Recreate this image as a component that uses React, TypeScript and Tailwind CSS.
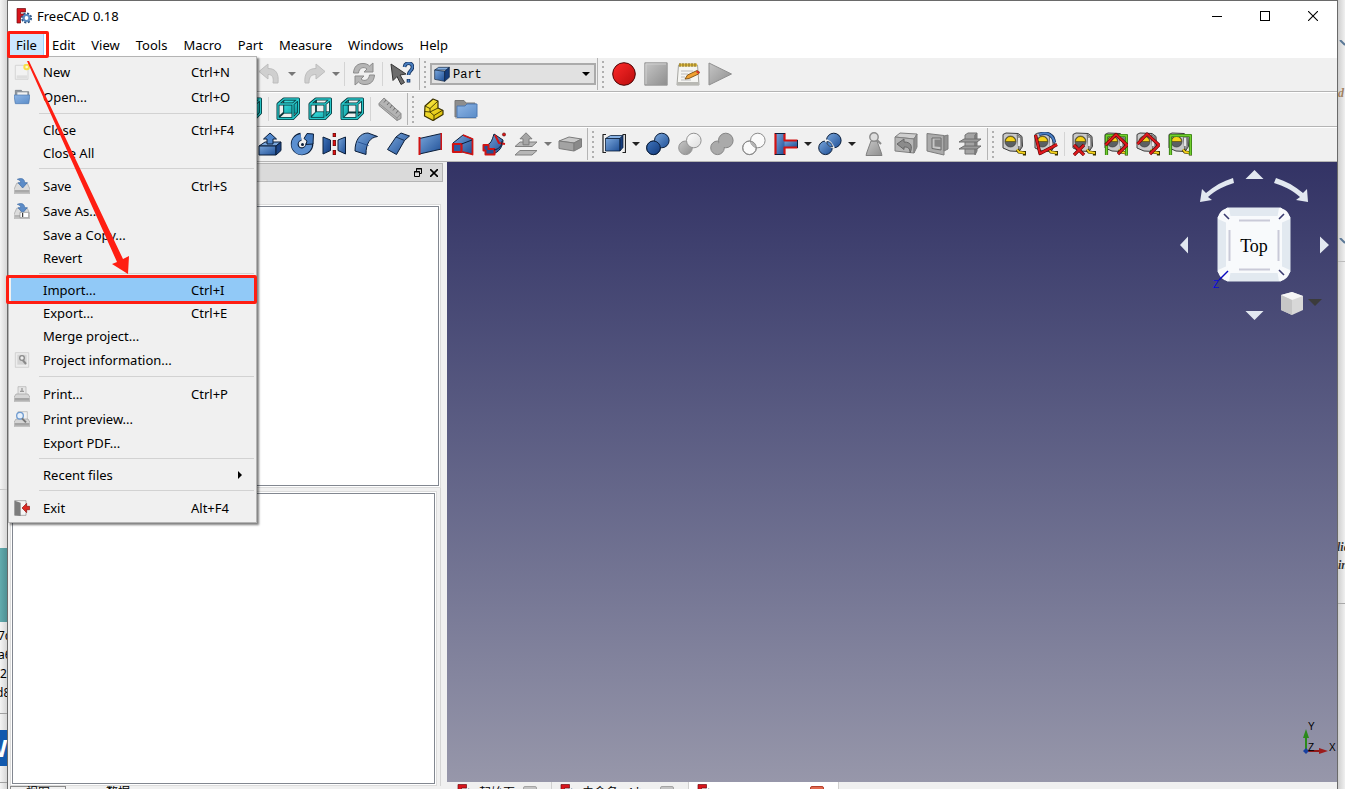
import { Fragment, type ReactNode } from 'react';

const INK = '#0b1e3a';

function Icon({ children, className = 'size-6' }: { children: ReactNode; className?: string }) {
  return (
    <svg viewBox="0 0 24 24" className={className} fill="none" strokeLinejoin="round" aria-hidden="true">
      {children}
    </svg>
  );
}

// Gradients shared by all of the icons
function Gradients() {
  const list = [
    ['blue', '#7aa7dc', '#1f4f96'],
    ['deep', '#3f75bd', '#123a7c'],
    ['gray', '#c6c6c6', '#8e8e8e'],
    ['pale', '#ffffff', '#dcdcdc'],
    ['red', '#ff2a2a', '#b80c0c'],
    ['yellow', '#fff04a', '#d8b800'],
    ['teal', '#3fe6e6', '#0c9a9e'],
    ['folder', '#8fb6e6', '#5a8cc8'],
  ];
  return (
    <svg width="0" height="0" className="absolute" aria-hidden="true">
      <defs>
        {list.map(([id, from, to]) => (
          <linearGradient key={id} id={id} x1="0" y1="0" x2="1" y2="1">
            <stop offset="0" stopColor={from} />
            <stop offset="1" stopColor={to} />
          </linearGradient>
        ))}
      </defs>
    </svg>
  );
}

function AppLogo({ className }: { className?: string }) {
  return (
    <svg viewBox="0 0 16 16" className={className} aria-hidden="true">
      <path d="M1 .5h8.500v3.500h-5v2h4v3h-4v6h-3.500z" fill="#d8141c" stroke="#6d0c10" strokeWidth=".7" />
      <circle cx="10.500" cy="10" r="4" fill="none" stroke="#27507f" strokeWidth="3" strokeDasharray="1.800 1.340" />
      <circle cx="10.500" cy="10" r="3" fill="none" stroke="#5b8bc0" strokeWidth="2.200" />
      <circle cx="10.500" cy="10" r="1.300" fill="#fff" />
    </svg>
  );
}

function Circles({ a, b, stroke, overlay }: { a: string; b: string; stroke: string; overlay?: ReactNode }) {
  return (
    <Icon>
      <circle cx="7.500" cy="15.800" r="6.800" fill={a} stroke={stroke} />
      <circle cx="15.800" cy="8.500" r="7.300" fill={b} stroke={stroke} />
      {overlay}
    </Icon>
  );
}

function WireCube({ face }: { face: 'rear' | 'bottom' | 'left' | 'right' }) {
  const faces = {
    rear: '8,3 22,3 22,16 8,16',
    bottom: '2,22 8,15 22,15 17,22',
    left: '2,7 8,2 8,15 2,22',
    right: '17,7 22,2 22,16 17,22',
  };
  return (
    <Icon>
      <path d="M8 3v12.500h14M8 15.500L2 21" stroke="#08363a" strokeWidth="1.800" />
      <polygon points={faces[face]} fill="url(#teal)" stroke="#0b6a6e" strokeWidth=".6" />
      <path d="M2 7h15v14.500H2zM2 7l6-5h14.500L17 7M22.500 2v14L17 21.500" stroke="#06393d" strokeWidth="3" />
      <path d="M2 7h15v14.500H2zM2 7l6-5h14.500L17 7M22.500 2v14L17 21.500" stroke="#28c8ca" strokeWidth="1.300" />
    </Icon>
  );
}

function Tape({ overlay }: { overlay?: ReactNode }) {
  return (
    <Icon>
      <path d="M1 2.500L4 1l12 .5 4 3 .5 10-3.500 5-9-.5-7-3z" fill="#c9c9c9" stroke="#3c3c3c" />
      <path d="M15 2.500l4 2.500.800 9.500-3 4z" fill="#9a9a9a" stroke="#4a4a4a" strokeWidth=".6" />
      <path d="M17 6v8" stroke="#fafafa" strokeWidth="1.600" />
      <circle cx="8.500" cy="9.500" r="5.500" fill="#5b6062" stroke="#3c3c3c" strokeWidth=".7" />
      <path d="M3.500 9.500a5 5 0 0 1 10 0z" fill="#f6d31c" stroke="#4d4200" strokeWidth=".6" />
      <path d="M15 17.500l2 2.500 6 1M22.500 19v4.500" stroke="#3a3200" strokeWidth="3.200" />
      <path d="M15 17.500l2 2.500 6 1" stroke="#f6d31c" strokeWidth="1.800" />
      {overlay}
    </Icon>
  );
}

const redMark = (d: string) => (
  <>
    <path d={d} stroke="#5c0505" strokeWidth="3.200" />
    <path d={d} stroke="#e0191d" strokeWidth="2" />
  </>
);

const greenMark = (
  <>
    <path d="M2.500 23V3.500h20V23" stroke="#23610b" strokeWidth="3.200" />
    <path d="M2.500 23V3.500h20V23" stroke="#72cf2e" strokeWidth="1.800" />
  </>
);

const icons: Record<string, ReactNode> = {
  undo: (
    <Icon>
      <path d="M1 9.500L10 2v4.500c8 0 11 5 10 14.500h-5c1-6-1-8.500-5-8.500V17z" fill="#cfcfcf" stroke="#bdbdbd" />
    </Icon>
  ),
  redo: (
    <Icon>
      <path d="M23 9.500L14 2v4.500c-8 0-12 5-11 14.500h4c0-6 2-8.500 7-8.500V17z" fill="#cfcfcf" stroke="#bdbdbd" />
    </Icon>
  ),
  refresh: (
    <Icon>
      <path d="M1.500 11C2 4.500 5.500 1.500 11 1.500c3 0 5 1 6.500 2.500l3.500-3v9h-9l3-3c-3.500-3-8-1-8.500 4z" fill="#b5b5b5" stroke="#8b8b8b" />
      <path d="M22.500 13c-.5 6.500-4 9.500-9.500 9.500-3 0-5-1-6.500-2.500L3 23v-9h9l-3 3c3.500 3 8 1 8.500-4z" fill="#b5b5b5" stroke="#8b8b8b" />
    </Icon>
  ),
  whatsThis: (
    <Icon>
      <path d="M1 2l15 10-6 1 4.500 7.500-3.500 2-4-8-4 4z" fill="#6c6c6c" stroke="#343434" />
      <path d="M14.500 5c.5-5 8-5 8 0 0 4-4 3.500-4 8M18.500 17v3.500" stroke="#12305c" strokeWidth="3.600" />
      <path d="M14.500 5c.5-5 8-5 8 0 0 4-4 3.500-4 8M18.500 17.500v2.500" stroke="#4a7fc0" strokeWidth="1.800" />
    </Icon>
  ),
  record: (
    <Icon>
      <circle cx="12" cy="12" r="11.300" fill="url(#red)" stroke="#4a0707" />
    </Icon>
  ),
  stop: (
    <Icon>
      <rect x=".8" y=".8" width="22.400" height="22.400" fill="url(#gray)" stroke="#989898" />
      <path d="M2 22V2h20" stroke="#cfcfcf" />
    </Icon>
  ),
  macros: (
    <Icon>
      <path d="M2.500 3h19L23 23H1z" fill="#f5f5f2" stroke="#a5a5a0" />
      <path d="M1 20h22v3H1z" fill="#b9b9b4" />
      <path d="M3 1.500h18v3H3z" fill="#d9b63c" />
      <path d="M4 1v4M7 1v4M10 1v4M13 1v4M16 1v4M19 1v4" stroke="#5e4c14" strokeWidth=".7" />
      <path d="M5 9h12M5 12h7M5 15h4M5 18h10" stroke="#bcbcbc" />
      <path d="M9 17l2.500-4L21 8.500l2.500 1.500-1 2L13 16.500z" fill="#f0a030" stroke="#6b4308" strokeWidth=".8" />
      <path d="M21 8.500l2.500 1.500-1 2-2.500-2z" fill="#d8342c" />
    </Icon>
  ),
  play: (
    <Icon>
      <path d="M1 1l22.500 11L1 23z" fill="url(#gray)" stroke="#8f8f8f" />
    </Icon>
  ),
  cubeRight: <WireCube face="right" />,
  cubeRear: <WireCube face="rear" />,
  cubeBottom: <WireCube face="bottom" />,
  cubeLeft: <WireCube face="left" />,
  ruler: (
    <Icon>
      <path d="M1 6.500l5-5.500 17 15.500v5l-4 2L1 8.500z" fill="#b4b4b4" stroke="#8a8a8a" />
      <path d="M1 6.500l18 14.500 4-4.500M19 21v2.500" stroke="#8a8a8a" strokeWidth=".8" />
      <path d="M8 3l-2 2.500M11 5.500l-2 2.500M14 8l-2 3M17 11l-2 2.500M20 13.500l-2 3" stroke="#666" strokeWidth=".9" />
    </Icon>
  ),
  part: (
    <Icon>
      <path d="M3 9l8-7 5 2v7l5 2.500v4L11 23.500 2.500 19z" fill="url(#yellow)" stroke="#3b3200" strokeWidth="1.200" />
      <path d="M3 9l5 2.500L16 4M8 11.500V15l8-4M2.500 14.500L8 15l4 3.500 9-5.500M12 18.500v5" stroke="#3b3200" strokeWidth=".9" />
    </Icon>
  ),
  group: (
    <Icon>
      <path d="M1 20V3.500h9L12 6h9v14z" fill="#8d8d8d" stroke="#777" />
      <path d="M3 20.500V9h8l2-2h10v12.500l-1 1z" fill="url(#folder)" stroke="#4c79b2" />
      <path d="M1.500 21.500h21" stroke="#c4c4c4" />
    </Icon>
  ),
  extrude: (
    <Icon>
      <path d="M1 14l6-4h16l-5 4z" fill="#7aa7dc" stroke={INK} />
      <path d="M1 14h17v9H1z" fill="url(#blue)" stroke={INK} />
      <path d="M18 14l5-4v8.500L18 23z" fill="#1b4486" stroke={INK} />
      <path d="M12 1l6.500 6H15v5H9V7H5.500z" fill="#4f86cb" stroke={INK} />
    </Icon>
  ),
  revolve: (
    <Icon>
      <path d="M11 4.700A7.300 7.300 0 1 0 19.300 11" stroke={INK} strokeWidth="8" />
      <path d="M11 5A7.300 7.300 0 1 0 19 11.300" stroke="#5b8fd0" strokeWidth="6.200" />
      <path d="M14 6.500l3-5 6.500.5-.5 10-7 .5 1-3.500z" fill="#4379bd" stroke={INK} />
      <circle cx="12.500" cy="12.500" r="1.500" fill={INK} />
    </Icon>
  ),
  mirror: (
    <Icon>
      <path d="M1 5l7.500 3v10.500L1 22z" fill="url(#deep)" stroke={INK} />
      <path d="M16 8l7.500-3v17L16 18.500z" fill="url(#blue)" stroke={INK} />
      <path d="M12.300 1v4M12.300 8v6M12.300 18v5" stroke="#4b0505" strokeWidth="3.200" />
      <path d="M12.300 1.600v3M12.300 8.600v5M12.300 18.600v4" stroke="#e01010" strokeWidth="2" />
    </Icon>
  ),
  fillet: (
    <Icon>
      <path d="M1 19C1 8 6 1 14 1l9.500 3.500C16 5.500 12 11 12 22.500z" fill="url(#blue)" stroke={INK} />
      <path d="M4 10l10.500 3.500" stroke="#2a5596" />
    </Icon>
  ),
  chamfer: (
    <Icon>
      <path d="M1.500 17.500L10 5l5-4 8.500 3-5 4.500-8 14z" fill="url(#blue)" stroke={INK} />
      <path d="M10 5l8.500 3.500" stroke={INK} strokeWidth=".8" />
    </Icon>
  ),
  ruled: (
    <Icon>
      <path d="M1.500 6.500l22-5V17l-22 5z" fill="url(#blue)" stroke={INK} />
      <path d="M1.500 5v18M23.500 1v17" stroke="#d01414" strokeWidth="2" />
    </Icon>
  ),
  loft: (
    <Icon>
      <path d="M3 11l10-8 9.500 4v15L12 20z" fill="url(#blue)" stroke={INK} />
      <path d="M13 3l9.500 4v15.500L13 20" stroke="#d01414" strokeWidth="1.800" />
      <path d="M3 12h8.500v8H3z" fill="#2b5ca6" stroke="#d01414" strokeWidth="2.200" />
      <path d="M11.500 12L22 8" stroke={INK} />
    </Icon>
  ),
  sweep: (
    <Icon>
      <path d="M3 13c6 0 7-5 9-11l9 6c0 6-4 13-11 14z" fill="url(#blue)" stroke={INK} />
      <path d="M1.500 13h5v4h6v5.500h-9v-4h-2z" fill="#244f94" stroke="#d01414" strokeWidth="2" />
      <path d="M13 3l4 8 6 1" stroke="#d01414" strokeWidth="2" />
      <path d="M12 18c5-1 8-4 8-9" stroke={INK} />
      <circle cx="22" cy="2.500" r="1.600" fill="#e01414" stroke="#4b0505" strokeWidth=".6" />
    </Icon>
  ),
  offset: (
    <Icon>
      <path d="M1 14.500L6 10h17l-5 4.500zM1 23l5-4.500h17L18 23z" fill="#b7b7b7" stroke="#808080" />
      <path d="M12 .8l6 6h-3v6H9v-6H6z" fill="#a5a5a5" stroke="#7d7d7d" />
    </Icon>
  ),
  thickness: (
    <Icon>
      <path d="M1 9l10-4 12.500 2L16 11z" fill="#c9c9c9" stroke="#7c7c7c" />
      <path d="M1 9l15 2v8L1 16.500z" fill="#a3a3a3" stroke="#7c7c7c" />
      <path d="M16 11l7.500-4v8L16 19z" fill="#8a8a8a" stroke="#7c7c7c" />
    </Icon>
  ),
  compound: (
    <Icon>
      <path d="M4 2.500H1v18h3M20.500 2.500h3v18h-3" stroke="#222" strokeWidth="1.200" />
      <path d="M3.500 6.500l5-3h12.500l-3 3z" fill="#86b0e2" stroke={INK} strokeWidth=".8" />
      <path d="M3.500 6.500H18V19H3.500z" fill="url(#blue)" stroke={INK} strokeWidth=".8" />
      <path d="M18 6.500l3-3v12L18 19z" fill="#163d7c" stroke={INK} strokeWidth=".8" />
    </Icon>
  ),
  boolean: (
    <Circles
      a="url(#deep)"
      b="url(#blue)"
      stroke={INK}
      overlay={<circle cx="7.500" cy="15.800" r="6.800" fill="url(#deep)" stroke={INK} />}
    />
  ),
  cut: <Circles a="url(#gray)" b="url(#pale)" stroke="#929292" />,
  union: <Circles a="#aaa" b="#aaa" stroke="#858585" overlay={<path d="M8 12l5 5 2-4-4-4z" fill="#aaa" />} />,
  intersect: (
    <Circles
      a="#fafafa"
      b="#fafafa"
      stroke="#8b8b8b"
      overlay={
        <>
          <path d="M9 9.200C10 8.700 14 12 14.300 15.700 11 15 9 13 9 9.200z" fill="#b5b5b5" />
          <circle cx="7.500" cy="15.800" r="6.800" stroke="#8b8b8b" />
        </>
      }
    />
  ),
  join: (
    <Icon>
      <path d="M10 8.500h13v7H10z" fill="url(#blue)" />
      <path d="M1.500 1.500h9v21h-9z" fill="url(#blue)" />
      <path d="M1.500 1v22M10.500 1v7.500h13M10.500 23v-7.500h13" stroke="#d01414" strokeWidth="2.200" />
      <path d="M1 1.500h10M1 22.500h10M23.500 8v8" stroke={INK} />
    </Icon>
  ),
  split: (
    <Circles
      a="url(#blue)"
      b="url(#blue)"
      stroke={INK}
      overlay={
        <>
          <path d="M7 9c4-1 8 3 8 7M9 7.500c0 4 3 8 7.500 8" stroke="#f4f4f4" strokeWidth="2" />
          <path d="M9 9.500c3 0 5 2 5.500 5.500C11 15 9 13 9 9.500z" fill="#4f86cb" stroke={INK} strokeWidth=".7" />
        </>
      }
    />
  ),
  check: (
    <Icon>
      <path d="M9 9h6l4 11 1 3.500H4L5 20z" fill="url(#gray)" stroke="#808080" />
      <circle cx="12" cy="5" r="4.200" fill="#dedede" stroke="#8a8a8a" strokeWidth="1.400" />
      <path d="M15 8l4 4" stroke="#8a8a8a" strokeWidth="2" />
    </Icon>
  ),
  defeature: (
    <Icon>
      <path d="M1 5l5-4 17 1-3 5z" fill="#cfcfcf" stroke="#808080" />
      <path d="M1 5l19 2v14L1 19z" fill="#b5b5b5" stroke="#808080" />
      <path d="M20 7l3-5v13l-3 6z" fill="#8f8f8f" stroke="#808080" />
      <path d="M3 12l7-5v3c7 0 9 4 6 11 0-5-2-6-6-6v2.500z" fill="#8b8b8b" stroke="#666" />
    </Icon>
  ),
  section: (
    <Icon>
      <path d="M1 1.500l17 2v19.500L1 19z" fill="#ababab" stroke="#7d7d7d" />
      <path d="M18 4l4-1v14l-4 2z" fill="#939393" stroke="#7d7d7d" />
      <path d="M6 6h9v12l-9-1.500z" fill="#c6c6c6" stroke="#6a6a6a" />
      <path d="M8.500 7.500H15V15l-6.500-.5z" fill="#858585" />
    </Icon>
  ),
  crossSections: (
    <Icon>
      <path d="M7 3l3-2h9l-2 2v19H7z" fill="#a3a3a3" stroke="#757575" />
      <path d="M17 3l2-2v18l-2 4z" fill="#858585" stroke="#757575" />
      <path d="M1 10l5-3h17l-4 3zM1 17l5-3h17l-4 3z" fill="#9b9b9b" stroke="#6e6e6e" />
    </Icon>
  ),
  measureLinear: <Tape />,
  measureAngular: (
    <Tape
      overlay={
        <>
          <path d="M5 2.500c8-3 14 0 15.500 8" stroke="#12305c" strokeWidth="3.400" />
          <path d="M5 2.500c8-3 14 0 15.500 8" stroke="#4b7fc4" strokeWidth="2" />
          {redMark('M1.500 3L6 21.500l17-9')}
        </>
      }
    />
  ),
  measureClear: <Tape overlay={redMark('M2 13l10 10M12 13L2 23')} />,
  measureToggle: <Tape overlay={<>{greenMark}{redMark('M1.500 13L12 2.500l11 10.500-9 9')}</>} />,
  measure3d: <Tape overlay={redMark('M1.500 12L11 2l12 11-9 9')} />,
  measureDelta: <Tape overlay={greenMark} />,
};

type Tool = string | { menu: 'dark' | 'light' };
const SEP = '|';
const BREAK = '||';

const fileTools: Tool[] = ['undo', { menu: 'light' }, 'redo', { menu: 'light' }, SEP, 'refresh', SEP, 'whatsThis', BREAK];
const macroTools: Tool[] = [BREAK, 'record', 'stop', 'macros', 'play'];
const viewTools: Tool[] = ['cubeRight', SEP, 'cubeRear', 'cubeBottom', 'cubeLeft', SEP, 'ruler', BREAK, 'part', 'group'];
const partTools: Tool[] = [
  'extrude', 'revolve', 'mirror', 'fillet', 'chamfer', 'ruled', 'loft', 'sweep', 'offset', { menu: 'light' }, 'thickness', BREAK,
  'compound', { menu: 'dark' }, 'boolean', 'cut', 'union', 'intersect', 'join', { menu: 'dark' }, 'split', { menu: 'dark' },
  'check', 'defeature', 'section', 'crossSections', BREAK,
  'measureLinear', 'measureAngular', SEP, 'measureClear', 'measureToggle', 'measure3d', 'measureDelta',
];

function Tools({ items }: { items: Tool[] }) {
  return (
    <>
      {items.map((item, i) => {
        if (typeof item !== 'string') {
          return (
            <button key={i} aria-label="More" className="flex h-8 w-3 shrink-0 items-center justify-center">
              <svg viewBox="0 0 8 4" className="h-1 w-2" aria-hidden="true">
                <path d="M0 0h8L4 4z" fill={item.menu === 'dark' ? '#222' : '#777'} />
              </svg>
            </button>
          );
        }
        if (item === SEP) return <span key={i} className="mr-[3px] ml-0.5 h-6 w-px shrink-0 bg-[#d4d4d4]" />;
        if (item === BREAK) {
          return (
            <span key={i} className="flex w-3 shrink-0 items-center self-stretch pl-px">
              <span className="h-full w-px bg-[#b4b4b4]" />
              <span className="ml-1 h-[27px] w-0.5 bg-[repeating-linear-gradient(#b0b0b0_0_2px,transparent_2px_5px)]" />
            </span>
          );
        }
        return (
          <button key={i} aria-label={item} className="flex size-8 shrink-0 items-center justify-center">
            {icons[item]}
          </button>
        );
      })}
    </>
  );
}

const menuIcons: Record<string, ReactNode> = {
  new: (
    <Icon className="size-4">
      <path d="M2 2h19v21H2z" fill="#f2f2f2" stroke="#c9c9c9" />
      <path d="M4 17h16v5H4z" fill="#dedede" />
      <circle cx="19" cy="4.500" r="5" fill="#f6e04a" />
      <circle cx="19" cy="4.500" r="2" fill="#fffbd0" />
    </Icon>
  ),
  open: (
    <Icon className="size-4">
      <path d="M2 20V2h9l2 2h9v16z" fill="#8d959e" stroke="#6a727b" />
      <path d="M5 5h15v6H5z" fill="#f2f2f2" />
      <path d="M0 9h24l-2 13H2z" fill="url(#folder)" stroke="#4c79b2" />
    </Icon>
  ),
  save: (
    <Icon className="size-4">
      <path d="M4 8h16l4 9v6H0v-6z" fill="#dcdcdc" stroke="#a0a0a0" />
      <path d="M1 18h22v4H1z" fill="#a9a9a9" />
      <path d="M5 2c7-3 11 0 11 5h4l-7 8-7-8h4c0-2-1-4-5-5z" fill="#5c8cc8" stroke="#3a68a4" />
    </Icon>
  ),
  saveAs: (
    <Icon className="size-4">
      <path d="M4 8h16l4 9v6H0v-6z" fill="#dcdcdc" stroke="#a0a0a0" />
      <path d="M1 18h22v4H1z" fill="#b5b5b5" />
      <path d="M5 2c7-3 11 0 11 5h4l-7 8-7-8h4c0-2-1-4-5-5z" fill="#5c8cc8" stroke="#3a68a4" />
      <path d="M9 14h13v8H9z" fill="#fff" stroke="#888" />
      <path d="M13 15v6" stroke="#222" strokeWidth="1.600" />
    </Icon>
  ),
  info: (
    <Icon className="size-4">
      <path d="M2 1h20v22H2z" fill="#ececec" stroke="#c4c4c4" />
      <path d="M5 4h14v15H5z" fill="#d4d4d4" />
      <circle cx="12" cy="9" r="3.500" stroke="#8a8a8a" strokeWidth="2" fill="#eee" />
      <path d="M13 12l5 6" stroke="#8a8a8a" strokeWidth="3" />
    </Icon>
  ),
  print: (
    <Icon className="size-4">
      <path d="M6 1h12v12H6z" fill="#e6e6e6" stroke="#b0b0b0" />
      <path d="M9 8h6M12 3v6" stroke="#999" strokeWidth="2" />
      <path d="M3 12h18l3 5v6H0v-6z" fill="#d5d5d5" stroke="#a2a2a2" />
      <path d="M1 18h22v4H1z" fill="#a5a5a5" />
    </Icon>
  ),
  preview: (
    <Icon className="size-4">
      <path d="M6 1h14v12H6z" fill="#f0f0f0" stroke="#b0b0b0" />
      <path d="M3 12h18l3 5v6H0v-6z" fill="#d5d5d5" stroke="#a2a2a2" />
      <path d="M1 18h22v4H1z" fill="#a5a5a5" />
      <circle cx="9" cy="7" r="5" fill="#e6f0fb" stroke="#6f9bd0" strokeWidth="2" />
      <path d="M12 11l6 6" stroke="#777" strokeWidth="3" />
    </Icon>
  ),
  exit: (
    <Icon className="size-4">
      <path d="M1 1h17v22H1z" fill="#f5f5f5" stroke="#8a8a8a" />
      <path d="M1 1l9 3v20l-9-1z" fill="#7d7d7d" />
      <path d="M23.500 9.500v5H19V19l-7-7 7-7v4.500z" fill="#dd2a22" stroke="#8d1410" />
    </Icon>
  ),
};

interface MenuEntry {
  label: string;
  keys?: string;
  icon?: string;
  active?: boolean;
  submenu?: boolean;
}

const fileMenu: MenuEntry[][] = [
  [
    { label: 'New', keys: 'Ctrl+N', icon: 'new' },
    { label: 'Open...', keys: 'Ctrl+O', icon: 'open' },
  ],
  [{ label: 'Close', keys: 'Ctrl+F4' }, { label: 'Close All' }],
  [
    { label: 'Save', keys: 'Ctrl+S', icon: 'save' },
    { label: 'Save As...', icon: 'saveAs' },
    { label: 'Save a Copy...' },
    { label: 'Revert' },
  ],
  [
    { label: 'Import...', keys: 'Ctrl+I', active: true },
    { label: 'Export...', keys: 'Ctrl+E' },
    { label: 'Merge project...' },
    { label: 'Project information...', icon: 'info' },
  ],
  [
    { label: 'Print...', keys: 'Ctrl+P', icon: 'print' },
    { label: 'Print preview...', icon: 'preview' },
    { label: 'Export PDF...' },
  ],
  [{ label: 'Recent files', submenu: true }],
  [{ label: 'Exit', keys: 'Alt+F4', icon: 'exit' }],
];

function FileMenu() {
  return (
    <div
      role="menu"
      className="absolute top-full left-0 z-20 -mt-px w-[249px] border border-[#b4b4b4] bg-[#f0f0f0] py-0.5 pr-0.5 pl-0.5 shadow-[2px_2px_2px_rgba(0,0,0,0.5)]"
    >
      {fileMenu.map((group, i) => (
        <Fragment key={i}>
          {i > 0 && (
            <div className="flex h-[9px] items-center pl-7">
              <span className="h-px w-full bg-[#d2d2d2]" />
            </div>
          )}
          {group.map((entry) => (
            <button
              key={entry.label}
              role="menuitem"
              className={`flex w-full items-center text-left ${entry.icon ? 'h-[25px]' : 'h-[23px]'} ${entry.active ? 'bg-[#91c9f7]' : ''}`}
            >
              <span className="flex w-8 shrink-0 pl-[3px]">{entry.icon && menuIcons[entry.icon]}</span>
              <span className="w-[148px] shrink-0 whitespace-nowrap">{entry.label}</span>
              <span className="whitespace-nowrap">{entry.keys}</span>
              {entry.submenu && (
                <svg viewBox="0 0 4 8" className="mr-3 ml-auto h-2 w-1" aria-hidden="true">
                  <path d="M0 0l4 4-4 4z" fill="#000" />
                </svg>
              )}
            </button>
          ))}
        </Fragment>
      ))}
      {/* Highlight round the import entry */}
      <span className="pointer-events-none absolute top-[218px] -left-[3px] h-[29px] w-[251px] rounded-xs border-3 border-[#ff1e12]" />
      <svg viewBox="0 0 104 216" className="pointer-events-none absolute top-1 left-[18px] h-[216px] w-[104px]" aria-hidden="true">
        <path d="M0 0h2l94 198 6-3-1 18-16-10 5-2z" fill="#ff1e12" />
      </svg>
    </div>
  );
}

function NavigationCube() {
  return (
    <svg viewBox="0 0 160 170" className="absolute top-0 right-0 h-[170px] w-40" role="img" aria-label="Navigation cube">
      <g fill="#e2e8f0">
        <path d="M77.500 8l9 9h-18zM77.500 158l9-9h-18zM3 83l8-8.500v17zM152 83l-9-8.500v17z" />
        <path d="M56 16c-10 3-19 8-27 15l-4-4-2 13 12-2-4-3c8-7 16-11 26-14z" />
        <path d="M99 16c10 3 19 8 27 15l4-4 1 13-12-2 4-3c-8-7-16-11-26-14z" />
      </g>
      <path d="M50 46h54l9 9v55l-9 9H50l-9-9V55z" fill="#e2e9f0" stroke="#e2e9f0" strokeLinejoin="round" />
      <g fill="#f8fafc">
        <path d="M41 57c0-6 5-11 11-11l2 11-4 4zM113 57c0-6-5-11-11-11l-2 11 4 4zM41 108c0 6 5 11 11 11l2-11-4-4zM113 108c0 6-5 11-11 11l-2-11 4-4z" />
        <rect x="49" y="54" width="56" height="57" rx="3" />
      </g>
      <path d="M62 58.500h31M62 107.500h31M52.500 68v31M101.500 68v31" stroke="#c9cad8" strokeWidth="2" />
      <path d="M47 52l5 5M107 52l-5 5M107 113l-5-5" stroke="#3b3b70" strokeWidth="1.600" />
      <text x="77" y="90" textAnchor="middle" fontSize="18" fill="#000" className="font-['Liberation_Serif',serif]">
        Top
      </text>
      <path d="M51 109l-9 9" stroke="#0808c0" strokeWidth="1.500" />
      <text x="36" y="126" fontSize="10" fill="#0808e0" className="font-['Liberation_Sans',sans-serif]">
        Z
      </text>
      <path d="M104 133l11-3 11 4v14l-11 5-11-5z" fill="#d8d8d8" />
      <path d="M104 133l11-3 11 4-11 4z" fill="#f6f6f6" />
      <path d="M104 133l11 5v15l-11-5z" fill="#c6c6c6" />
      <path d="M131 137h14l-7 7z" fill="#3b3b3b" />
    </svg>
  );
}

function AxisCross() {
  return (
    <svg viewBox="0 0 36 36" className="absolute right-0 bottom-[26px] size-9" role="img" aria-label="Axis cross">
      <path d="M5 31V14" stroke="#2b8a1a" strokeWidth="2" />
      <path d="M5 9l3 9H2z" fill="#2b8a1a" />
      <path d="M6 31h13" stroke="#8f1818" strokeWidth="2" />
      <path d="M27 31l-9 3v-6z" fill="#9c1c1c" />
      <path d="M5 28l3 3-3 3-3-3z" fill="#1840a0" />
      <g fontSize="10" fill="#000" className="font-['Liberation_Sans',sans-serif]">
        <text x="7" y="10">Y</text>
        <text x="7" y="31">Z</text>
        <text x="28" y="31">X</text>
      </g>
    </svg>
  );
}

function DocumentTab({ title, active, className }: { title: string; active?: boolean; className: string }) {
  return (
    <button
      className={`flex h-6 items-start gap-1.5 border-r border-[#d0d0d0] pt-0.5 pr-3.5 pl-2 text-left ${active ? 'bg-white' : 'bg-[#f0f0f0]'} ${className}`}
    >
      <AppLogo className="size-4 shrink-0" />
      <span className="flex-1 whitespace-nowrap pt-px text-xs leading-4">{title}</span>
      <span
        className={`mt-0.5 h-3 w-3.5 shrink-0 rounded-xs border ${active ? 'border-[#b5402c] bg-[#e2684e]' : 'border-[#a4a4a4] bg-[#c4c4c4]'}`}
      />
    </button>
  );
}

const menus = ['Edit', 'View', 'Tools', 'Macro', 'Part', 'Measure', 'Windows', 'Help'];

export default function App() {
  return (
    <div className="flex h-screen overflow-hidden bg-[#ececec] font-['Noto_Sans','Noto_Sans_CJK_SC',sans-serif] text-[13px] leading-5 text-black">
      <Gradients />

      {/* Windows lying behind, left side */}
      <div className="flex w-[7px] shrink-0 flex-col overflow-hidden bg-linear-to-r from-[#f4f4f4] to-[#d6d6d6]">
        <div className="h-[490px] shrink-0 border-b border-[#c8c8c8]" />
        <div className="h-[58px] shrink-0" />
        <div className="h-[74px] shrink-0 bg-linear-to-r from-[#62abae] to-[#4f9094]" />
        <div className="h-[92px] shrink-0 border-b border-[#a0a0a0] pt-1 text-xs leading-[19px]">
          <p className="-ml-0.5">7c</p>
          <p className="-ml-0.5">a6</p>
          <p>2</p>
          <p className="-ml-1">d8</p>
        </div>
        <div className="mt-4 h-9 shrink-0 bg-[#1259ae] text-2xl leading-9 font-bold text-white">
          <p className="-ml-4">W</p>
        </div>
        <div className="mt-4 h-px shrink-0 bg-[#a0a0a0]" />
      </div>

      <div className="flex min-w-0 flex-1 flex-col border-x border-t border-[#6a6a6a] bg-[#f0f0f0]">
        {/* Title bar */}
        <header className="flex h-[30px] shrink-0 items-center bg-white pl-2">
          <AppLogo className="mr-[5px] size-4" />
          <h1 className="flex-1">FreeCAD 0.18</h1>
          <button aria-label="Minimize" className="flex h-full w-12 items-center justify-center">
            <span className="h-px w-2.5 bg-black" />
          </button>
          <button aria-label="Maximize" className="flex h-full w-12 items-center justify-center">
            <span className="size-2.5 border border-black" />
          </button>
          <button aria-label="Close" className="flex h-full w-12 items-center justify-center">
            <svg viewBox="0 0 10 10" className="size-2.5" aria-hidden="true">
              <path d="M0 0l10 10M10 0L0 10" stroke="#000" strokeWidth="1.100" />
            </svg>
          </button>
        </header>

        {/* Menu bar */}
        <nav className="relative flex h-[26px] shrink-0 items-center bg-white pt-0.5">
          <button className="ml-0.5 h-6 w-[34px] border-r border-[#99d1ff] bg-[#cce8ff] text-center" aria-haspopup="menu" aria-expanded="true">
            File
          </button>
          {menus.map((name) => (
            <button key={name} className="px-2">
              {name}
            </button>
          ))}
          <FileMenu />
          <span className="pointer-events-none absolute top-0 -left-px z-30 h-[27px] w-[42px] rounded-xs border-3 border-[#ff1e12]" />
        </nav>

        {/* Toolbars */}
        <div className="flex h-[35px] shrink-0 items-center border-t border-b border-t-white border-b-[#b4b4b4] pb-px pl-[246px]">
          <Tools items={fileTools} />
          <div className="relative h-[22px] w-[166px] shrink-0">
            <select
              aria-label="Workbench"
              className="block size-full appearance-none border-2 border-[#ababab] bg-[#e1e1e1] pt-px pl-[21px] font-['Liberation_Mono',monospace] text-xs leading-4"
            >
              <option>Part</option>
            </select>
            <span className="pointer-events-none absolute inset-0 flex items-center justify-between pr-1.5 pl-1">
              <Icon className="size-4">
                <path d="M1 6l6-4h16l-4 4z" fill="#86b0e2" stroke={INK} />
                <path d="M1 6l15 2v15L1 20z" fill="url(#blue)" stroke={INK} />
                <path d="M16 8l7-6v15l-7 6z" fill="#163d7c" stroke={INK} />
              </Icon>
              <svg viewBox="0 0 8 4" className="h-1 w-2" aria-hidden="true">
                <path d="M0 0h8L4 4z" fill="#000" />
              </svg>
            </span>
          </div>
          <Tools items={macroTools} />
        </div>
        <div className="flex h-[35px] shrink-0 items-center border-t border-b border-t-white border-b-[#b4b4b4] pb-px pl-[226px]">
          <Tools items={viewTools} />
        </div>
        <div className="flex h-[35px] shrink-0 items-center border-t border-b border-t-white border-b-[#b4b4b4] pb-px pl-[246px]">
          <Tools items={partTools} />
        </div>

        <div className="flex min-h-0 flex-1">
          {/* Combo view */}
          <aside className="mr-1 flex w-[435px] shrink-0 flex-col">
            <div className="mt-px flex h-[19px] shrink-0 items-center justify-end gap-2 border border-[#b4b4b4] bg-[#dadada] pr-1">
              <button aria-label="Float panel">
                <svg viewBox="0 0 8 9" className="h-[9px] w-2" fill="none" stroke="#000" aria-hidden="true">
                  <path d="M2.500 3V.500h5v5H6M2 1h6M.500 3.500h5v5h-5zM0 4h6" />
                </svg>
              </button>
              <button aria-label="Close panel">
                <svg viewBox="0 0 8 8" className="size-2" stroke="#000" strokeWidth="1.600" aria-hidden="true">
                  <path d="M0 0l8 8M8 0L0 8" />
                </svg>
              </button>
            </div>
            <div className="mx-0.5 mt-[22px] h-[284px] shrink-0 border border-[#dcdcdc] bg-white p-px">
              <div className="h-[280px] border border-[#828790]" />
            </div>
            <div className="mx-0.5 flex min-h-0 flex-1 flex-col border-r border-[#d4d4d4] pt-[3px] pr-[3px]">
              <div className="flex min-h-0 flex-1 border border-[#dcdcdc] bg-white p-px">
                <div className="flex-1 border border-[#828790]" />
              </div>
            </div>
            <div className="flex h-[3px] shrink-0 items-start gap-10 overflow-hidden pl-0.5 text-xs leading-3">
              <button className="h-3 w-14 shrink-0 border border-[#8a8a8a]">视图</button>
              <button className="h-3 shrink-0">数据</button>
            </div>
          </aside>

          {/* 3D view */}
          <main className="flex min-w-0 flex-1 flex-col">
            <div className="relative min-h-0 flex-1 bg-linear-to-b from-[#333365] to-[#9797aa]">
              <NavigationCube />
              <AxisCross />
            </div>
            <div className="flex h-[7px] shrink-0 items-start overflow-hidden pl-0.5">
              <DocumentTab title="起始页" className="w-[103px]" />
              <DocumentTab title="未命名 : 1*" className="w-[137px]" />
              <DocumentTab title="" active className="w-[150px]" />
            </div>
          </main>
        </div>
      </div>

      {/* Windows lying behind, right side */}
      <div className="flex w-[7px] shrink-0 flex-col overflow-hidden bg-linear-to-r from-[#cfcfcf] to-[#f0f0f0] font-['Liberation_Serif',serif] text-xs leading-[18px] font-bold text-[#333] italic">
        <div className="flex h-[262px] shrink-0 flex-col border-b border-[#bcbcbc]">
          <svg viewBox="0 0 7 8" className="mt-10 h-2 w-[7px] shrink-0" fill="none" aria-hidden="true">
            <path d="M2 0l5 5" stroke="#5a7896" strokeWidth="2" />
          </svg>
          <span className="mt-9 text-[#a08060]">d</span>
          <svg viewBox="0 0 7 8" className="mt-[136px] h-2 w-[7px] shrink-0" fill="none" aria-hidden="true">
            <path d="M2 0l5 5" stroke="#5a7896" strokeWidth="2" />
          </svg>
        </div>
        <div className="h-[342px] shrink-0 border-b border-[#a8a8a8] pt-[276px]">
          <p className="-ml-px">lic</p>
          <p>in</p>
        </div>
      </div>
    </div>
  );
}
